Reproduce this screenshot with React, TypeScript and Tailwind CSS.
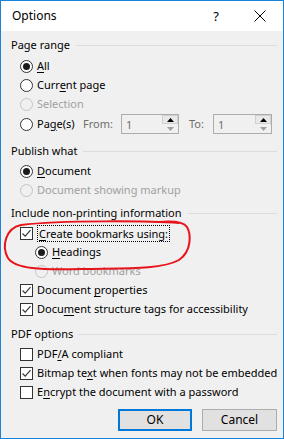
import React from "react";

const font = { fontFamily: '"Segoe UI", "Noto Sans", "Open Sans", sans-serif' };

function U({ children }: { children: React.ReactNode }) {
  return <span className="underline underline-offset-[2px] decoration-1">{children}</span>;
}

function Radio({ checked = false, disabled = false }: { checked?: boolean; disabled?: boolean }) {
  return (
    <span
      className={`flex h-[13px] w-[13px] shrink-0 items-center justify-center rounded-full border ${
        disabled ? "border-[#c4c4c4] bg-[#f0f0f0]" : "border-[#333333] bg-white"
      }`}
    >
      {checked && <span className="h-[7px] w-[7px] rounded-full bg-[#1b1b1b]" />}
    </span>
  );
}

function Check({ checked = false }: { checked?: boolean }) {
  return (
    <span className="flex h-[13px] w-[13px] shrink-0 items-center justify-center border border-[#333333] bg-white">
      {checked && (
        <svg width="11" height="11" viewBox="0 0 11 11">
          <path d="M1.5 5.5 L4.2 8.2 L9.5 2.2" fill="none" stroke="#333" strokeWidth="1.1" />
        </svg>
      )}
    </span>
  );
}

function Header({ children }: { children: React.ReactNode }) {
  return (
    <div className="flex h-[16px] items-center pl-[10px] pr-[6px]">
      <span className="whitespace-nowrap leading-[16px]">{children}</span>
      <span className="ml-[6px] h-px flex-1 bg-[#dcdcdc]" />
    </div>
  );
}

function Row({
  children,
  indent = 19,
  gap = 4,
  disabled = false,
}: {
  children: React.ReactNode;
  indent?: number;
  gap?: number;
  disabled?: boolean;
}) {
  return (
    <div
      className={`flex h-[19px] items-center whitespace-nowrap ${disabled ? "text-[#a0a0a0]" : "text-black"}`}
      style={{ paddingLeft: indent, columnGap: gap }}
    >
      {children}
    </div>
  );
}

function Spin({ width }: { width: number }) {
  return (
    <div className="flex h-[20px] border border-[#acacac] bg-[#f0f0f0]" style={{ width }}>
      <span className="flex-1 pl-[4px] pt-[1px] leading-[17px] text-[#6d6d6d]">1</span>
      <div className="flex w-[16px] flex-col">
        <div className="flex h-[9px] items-center justify-center border border-[#d0d0d0] bg-[#e8e8e8]">
          <svg width="7" height="4" viewBox="0 0 7 4">
            <path d="M0 4 L3.5 0 L7 4 Z" fill="#000" />
          </svg>
        </div>
        <div className="flex h-[9px] items-center justify-center">
          <svg width="7" height="4" viewBox="0 0 7 4">
            <path d="M0 0 L3.5 4 L7 0 Z" fill="#a0a0a0" />
          </svg>
        </div>
      </div>
    </div>
  );
}

export default function App() {
  return (
    <div
      className="relative h-[439px] w-[284px] overflow-hidden border border-[#1883d7] bg-[#f0f0f0] text-[11px] text-black"
      style={font}
    >
      {/* Title bar */}
      <div className="flex h-[30px] items-center bg-white">
        <span className="ml-[11px] text-[12px] leading-none">Options</span>
        <span className="ml-auto mr-[35px] text-[13px] leading-none">?</span>
        <svg className="mr-[17px]" width="12" height="12" viewBox="0 0 12 12">
          <path d="M0.5 0.5 L11.5 11.5 M11.5 0.5 L0.5 11.5" stroke="#000" strokeWidth="1" />
        </svg>
      </div>

      <div className="flex flex-col pt-[6px]">
        <Header>Page range</Header>
        <div className="mt-[4px]">
          <Row>
            <Radio checked />
            <span>
              <U>A</U>ll
            </span>
          </Row>
          <Row>
            <Radio />
            <span>
              Curr<U>e</U>nt page
            </span>
          </Row>
          <Row disabled>
            <Radio disabled />
            <span>Selection</span>
          </Row>
          <div className="flex h-[20px] items-center whitespace-nowrap pl-[19px]">
            <Radio />
            <span className="ml-[4px] w-[46px]">
              Pa<U>g</U>e(s)
            </span>
            <span className="w-[38px] text-[#6d6d6d]">From:</span>
            <Spin width={58} />
            <span className="ml-[10px] w-[24px] text-[#6d6d6d]">To:</span>
            <Spin width={59} />
          </div>
        </div>

        <div className="mt-[9px]">
          <Header>Publish what</Header>
        </div>
        <div className="mt-[3px]">
          <Row>
            <Radio checked />
            <span>
              <U>D</U>ocument
            </span>
          </Row>
          <Row disabled>
            <Radio disabled />
            <span>Document showing markup</span>
          </Row>
        </div>

        <div className="mt-[5px]">
          <Header>Include non-printing information</Header>
        </div>
        <div className="mt-[3px]">
          <Row>
            <Check checked />
            <span className="border border-dotted border-black px-px leading-[15px]">
              <U>C</U>reate bookmarks using:
            </span>
          </Row>
          <Row indent={34}>
            <Radio checked />
            <span>
              <U>H</U>eadings
            </span>
          </Row>
          <Row indent={34} disabled>
            <Radio disabled />
            <span>Word bookmarks</span>
          </Row>
          <Row>
            <Check checked />
            <span>
              Document <U>p</U>roperties
            </span>
          </Row>
          <Row>
            <Check checked />
            <span>
              Docu<U>m</U>ent structure tags for accessibility
            </span>
          </Row>
        </div>

        <div className="mt-[7px]">
          <Header>PDF options</Header>
        </div>
        <div className="mt-[3px]">
          <Row>
            <Check />
            <span>
              PDF<U>/</U>A compliant
            </span>
          </Row>
          <Row>
            <Check checked />
            <span>
              Bitmap te<U>x</U>t when fonts may not be embedded
            </span>
          </Row>
          <Row>
            <Check />
            <span>
              E<U>n</U>crypt the document with a password
            </span>
          </Row>
        </div>

        <div className="mt-[7px] flex justify-end gap-[10px] pr-[6px]">
          <button className="h-[22px] w-[74px] border-2 border-[#0078d7] bg-[#e1e1e1] text-[12px]">OK</button>
          <button className="h-[22px] w-[75px] border border-[#adadad] bg-[#e1e1e1] text-[12px]">Cancel</button>
        </div>
      </div>

      {/* Red freehand annotation */}
      <svg className="pointer-events-none absolute left-0 top-0" width="284" height="439" viewBox="0 0 284 439">
        <path
          d="M178 222 C150 220, 60 219, 20 224 C5 227, 0 245, 7 257 C14 268, 40 269, 80 268 C120 267, 160 269, 178 259 C191 250, 190 233, 186 226 C182 220, 170 220, 158 221"
          fill="none"
          stroke="#e8141b"
          strokeWidth="2"
          strokeLinecap="round"
        />
      </svg>
    </div>
  );
}
